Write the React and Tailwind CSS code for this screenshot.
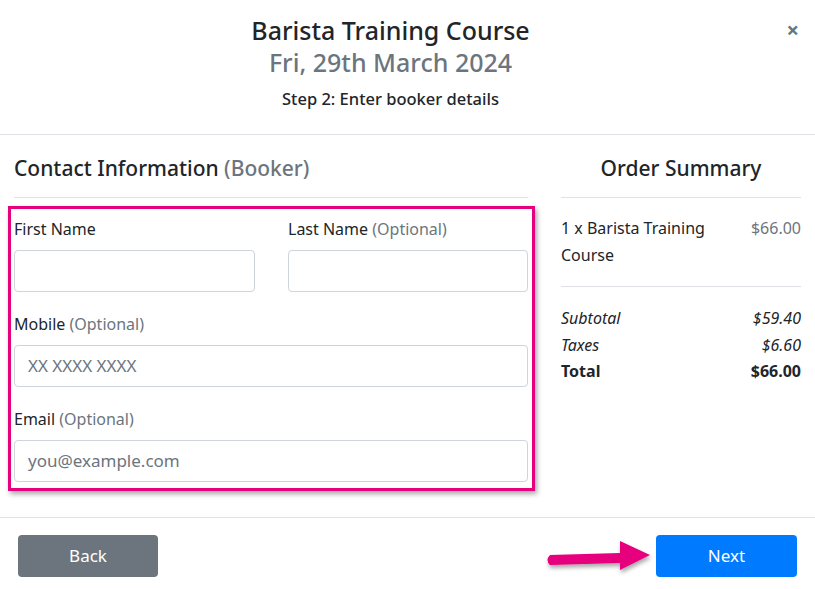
import React from "react";

const font = { fontFamily: '"Noto Sans", "Open Sans", Arial, sans-serif' };

function Field({ label, optional, placeholder, className = "" }) {
  return (
    <div className={className}>
      <div className="text-[16px] leading-[24px] text-[#212529] mb-[9px]">
        {label}
        {optional && <span className="text-[#6c757d]"> (Optional)</span>}
      </div>
      <div className="h-[42px] border border-[#ced4da] rounded-[4px] px-[13px] flex items-center text-[17px] text-[#6c757d]">
        {placeholder}
      </div>
    </div>
  );
}

export default function App() {
  return (
    <div style={font} className="w-[815px] h-[589px] bg-white text-[#212529] overflow-hidden flex flex-col">
      <div className="relative h-[135px] border-b border-[#dee2e6] flex flex-col items-center pt-[14px] pr-[34px]">
        <div className="text-[25px] leading-[32px] font-medium">Barista Training Course</div>
        <div className="text-[25px] leading-[32px] font-medium text-[#6c757d]">Fri, 29th March 2024</div>
        <div className="mt-[9px] text-[16.5px] leading-[24px] font-medium">Step 2: Enter booker details</div>
        <div className="absolute right-[16px] top-[14px] text-[22px] leading-[30px] text-[#6c757d] font-bold">×</div>
      </div>

      <div className="flex px-[14px] pt-[18px] h-[383px] border-b border-[#dee2e6]">
        <div className="w-[514px]">
          <div className="text-[21px] leading-[30px] font-medium pb-[14px] border-b border-[#dee2e6]">
            Contact Information <span className="text-[#6c757d]">(Booker)</span>
          </div>
          <div className="relative mt-[19px]">
            <div className="absolute -left-[6px] -top-[11px] w-[527px] h-[285px] border-[3px] border-[#e6007e] shadow-[2px_3px_5px_rgba(0,0,0,0.35)] pointer-events-none" />
            <div className="flex gap-[33px]">
              <Field label="First Name" className="w-[241px]" />
              <Field label="Last Name" optional className="w-[240px]" />
            </div>
            <Field label="Mobile" optional placeholder="XX XXXX XXXX" className="mt-[20px]" />
            <Field label="Email" optional placeholder="you@example.com" className="mt-[20px]" />
          </div>
        </div>
        <div className="w-[241px] ml-[33px]">
          <div className="text-[21px] leading-[30px] font-medium text-center pb-[14px] border-b border-[#dee2e6]">
            Order Summary
          </div>
          <div className="flex justify-between pt-[17px] pb-[17px] border-b border-[#dee2e6] text-[16px] leading-[27px]">
            <div className="w-[160px]">1 x Barista Training Course</div>
            <div className="text-[#6c757d]">$66.00</div>
          </div>
          <div className="pt-[18px] text-[16px] leading-[26.5px]">
            <div className="flex justify-between italic"><span>Subtotal</span><span>$59.40</span></div>
            <div className="flex justify-between italic"><span>Taxes</span><span>$6.60</span></div>
            <div className="flex justify-between font-bold"><span>Total</span><span>$66.00</span></div>
          </div>
        </div>
      </div>

      <div className="relative flex justify-between items-start px-[18px] pt-[17px]">
        <div className="w-[140px] h-[42px] rounded-[4px] bg-[#6c757d] text-white text-[17px] flex items-center justify-center">Back</div>
        <svg className="absolute left-[542px] top-[20px]" width="115" height="44" viewBox="0 0 115 44">
          <defs>
            <filter id="sh" x="-20%" y="-40%" width="140%" height="180%">
              <feDropShadow dx="1" dy="3" stdDeviation="2" floodColor="#000" floodOpacity="0.35" />
            </filter>
          </defs>
          <g filter="url(#sh)" fill="#e6007e">
            <path d="M8 17 L78 15 L78 3 L108 17 L78 32 L78 25 L8 27 Q3 22 8 17 Z" />
          </g>
        </svg>
        <div className="w-[141px] h-[42px] rounded-[4px] bg-[#007bff] text-white text-[17px] flex items-center justify-center">Next</div>
      </div>
    </div>
  );
}
